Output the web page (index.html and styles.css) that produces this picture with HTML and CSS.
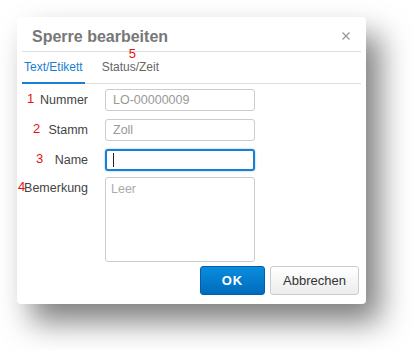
FILE: index.html
```html
<!DOCTYPE html>
<html lang="de">
<head>
    <meta charset="UTF-8">
    <meta name="viewport" content="width=device-width, initial-scale=1.0">
    <title>Sperre bearbeiten</title>
    <link rel="stylesheet" href="styles.css">
</head>
<body>
    <div class="dialog">
        <div class="dialog-header">
            <h1>Sperre bearbeiten</h1>
            <span class="close">
                <svg width="8" height="8" viewBox="0 0 8 8"><path d="M0.5 0.5L7.5 7.5M7.5 0.5L0.5 7.5" stroke="#9a9a9a" stroke-width="1.3"/></svg>
            </span>
        </div>
        <div class="tabs">
            <div class="tab active">Text/Etikett</div>
            <div class="tab">Status/Zeit<span class="mark mark-tab">5</span></div>
        </div>
        <div class="form">
            <div class="row">
                <span class="mark" style="left: 5px">1</span>
                <label>Nummer</label>
                <div class="field disabled">LO-00000009</div>
            </div>
            <div class="row">
                <span class="mark" style="left: 11px">2</span>
                <label>Stamm</label>
                <div class="field disabled">Zoll</div>
            </div>
            <div class="row">
                <span class="mark" style="left: 14px">3</span>
                <label>Name</label>
                <div class="field focused"><span class="caret"></span></div>
            </div>
            <div class="row row-note">
                <span class="mark" style="left: -4px">4</span>
                <label>Bemerkung</label>
                <div class="field textarea">Leer</div>
            </div>
        </div>
        <div class="dialog-footer">
            <button class="btn btn-primary">OK</button>
            <button class="btn">Abbrechen</button>
        </div>
    </div>
</body>
</html>
```

FILE: styles.css
```css
body {
    font-family: "Liberation Sans", Arial, sans-serif;
    background-color: #ffffff;
    margin: 0;
    padding: 17px;
    min-height: 100vh;
    box-sizing: border-box;
}

.dialog {
    width: 349px;
    box-sizing: border-box;
    background-color: #ffffff;
    border-radius: 4px;
    padding: 0 5px 9px;
    box-shadow: 14px 18px 30px rgba(0, 0, 0, 0.5);
}

.dialog-header {
    display: flex;
    justify-content: space-between;
    align-items: center;
    padding: 10px 11px 4px 10px;
    border-bottom: 1px solid #dddddd;
}

h1 {
    margin: 0;
    font-size: 16px;
    line-height: 20px;
    font-weight: bold;
    color: #777777;
}

.close {
    display: flex;
    margin-top: -2px;
}

.tabs {
    display: flex;
    height: 31px;
    border-bottom: 1px solid #dddddd;
}

.tab {
    position: relative;
    height: 30px;
    line-height: 30px;
    padding: 0 2px;
    margin-right: 15px;
    font-size: 12px;
    color: #666666;
    border-bottom: 2px solid transparent;
}

.tab.active {
    color: #1a7fd0;
    border-bottom-color: #1a7fd0;
}

.mark {
    position: absolute;
    top: 0;
    font-size: 13px;
    line-height: 20px;
    color: #e81010;
}

.mark-tab {
    top: -4px;
    left: 29px;
    line-height: 11px;
}

.form {
    display: flex;
    flex-direction: column;
    gap: 8px;
    padding-top: 5px;
}

.row {
    position: relative;
    display: flex;
    align-items: flex-start;
    gap: 17px;
}

.row-note {
    margin-top: -2px;
}

.row label {
    width: 66px;
    text-align: right;
    font-size: 12.5px;
    line-height: 22px;
    color: #444444;
}

.field {
    width: 150px;
    height: 22px;
    box-sizing: border-box;
    border: 1px solid #cccccc;
    border-radius: 3px;
    padding: 0 7px;
    font-size: 12.5px;
    line-height: 20px;
    color: #999999;
}

.field.focused {
    border: 2px solid #1a7fd4;
    box-shadow: 0 0 2px rgba(26, 127, 212, 0.6);
    padding: 2px 6px;
}

.caret {
    display: block;
    width: 1px;
    height: 14px;
    background-color: #222222;
}

.field.textarea {
    height: 85px;
    padding: 3px 5px;
    line-height: 16px;
    color: #aaaaaa;
}

.dialog-footer {
    display: flex;
    justify-content: flex-end;
    gap: 5px;
    padding: 4px 2px 0 0;
}

.btn {
    height: 29px;
    padding: 0;
    font-family: "Liberation Sans", Arial, sans-serif;
    font-size: 13px;
    color: #333333;
    width: 89px;
    border: 1px solid #cccccc;
    border-radius: 3px;
    background: linear-gradient(#ffffff, #ececec);
}

.btn-primary {
    width: 65px;
    font-weight: bold;
    color: #ffffff;
    letter-spacing: 1px;
    border-color: #0060b0;
    background: linear-gradient(#0a8ddc, #006bbd);
}
```
